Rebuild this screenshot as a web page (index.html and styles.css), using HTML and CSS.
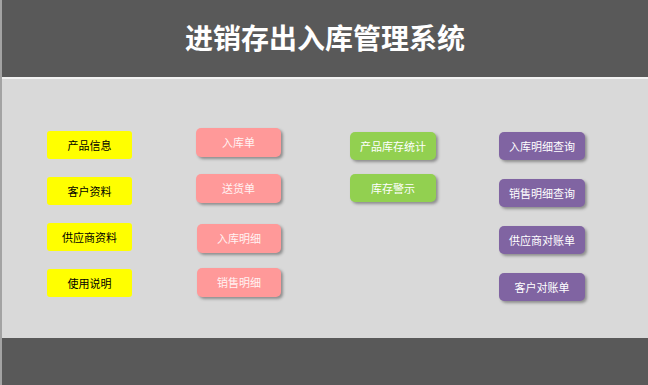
FILE: index.html
```html
<!DOCTYPE html>
<html lang="zh-CN">
<head>
    <meta charset="UTF-8">
    <meta name="viewport" content="width=device-width, initial-scale=1.0">
    <title>进销存出入库管理系统</title>
    <link rel="stylesheet" href="styles.css">
</head>
<body>
    <div class="sheet">
        <header class="banner">
            <h1>进销存出入库管理系统</h1>
        </header>

        <!-- menu buttons, one column per group -->
        <main class="menu">
            <div class="col col-base">
                <a class="btn btn-yellow" href="#">产品信息</a>
                <a class="btn btn-yellow" href="#">客户资料</a>
                <a class="btn btn-yellow" href="#">供应商资料</a>
                <a class="btn btn-yellow" href="#">使用说明</a>
            </div>
            <div class="col col-bills">
                <a class="btn btn-pink" href="#">入库单</a>
                <a class="btn btn-pink" href="#">送货单</a>
                <a class="btn btn-pink shift-down" href="#">入库明细</a>
                <a class="btn btn-pink shift-up" href="#">销售明细</a>
            </div>
            <div class="col col-stock">
                <a class="btn btn-green" href="#">产品库存统计</a>
                <a class="btn btn-green" href="#">库存警示</a>
            </div>
            <div class="col col-query">
                <a class="btn btn-purple" href="#">入库明细查询</a>
                <a class="btn btn-purple" href="#">销售明细查询</a>
                <a class="btn btn-purple" href="#">供应商对账单</a>
                <a class="btn btn-purple" href="#">客户对账单</a>
            </div>
        </main>

        <footer class="bottom-bar"></footer>
    </div>
</body>
</html>
```

FILE: styles.css
```css
:root {
    --dark: #595959;
    --panel: #d9d9d9;
    --yellow: #ffff00;
    --pink: #ff9999;
    --green: #92d050;
    --purple: #8064a2;
    --shadow: 2px 2px 3px rgba(0, 0, 0, 0.35);
}

html, body {
    margin: 0;
    padding: 0;
}

body {
    font-family: "Noto Sans CJK SC", "Noto Sans", sans-serif;
    background-color: var(--panel);
}

.sheet {
    width: 648px;
    height: 385px;
    display: flex;
    flex-direction: column;
    border-left: 2px solid #a3a3a3;
    box-sizing: border-box;
}

.banner {
    height: 77px;
    background-color: var(--dark);
    border-bottom: 2px solid #f2f2f2;
    display: flex;
    align-items: center;
    justify-content: center;
}

.banner h1 {
    margin: 0 0 3px 0;
    color: #ffffff;
    font-size: 28px;
    font-weight: 700;
}

.menu {
    height: 259px;
    display: flex;
    padding-left: 45px;
    background-color: var(--panel);
}

.col {
    display: flex;
    flex-direction: column;
    width: 86px;
}

.col-base {
    padding-top: 52px;
    gap: 18px;
    width: 85px;
}

.col-bills {
    margin-left: 64px;
    padding-top: 49px;
    gap: 17px;
    width: 85px;
}

.col-stock {
    margin-left: 69px;
    padding-top: 53px;
    gap: 14px;
}

.col-query {
    margin-left: 63px;
    padding-top: 53px;
    gap: 19px;
}

.btn {
    display: flex;
    align-items: center;
    justify-content: center;
    height: 28px;
    font-size: 11px;
    text-decoration: none;
    color: #ffffff;
    border-radius: 5px;
    box-shadow: var(--shadow);
}

.btn-yellow {
    background-color: var(--yellow);
    color: #000000;
    border-radius: 3px;
    box-shadow: none;
}

.btn-pink {
    height: 29px;
    background-color: var(--pink);
    color: #fff3f3;
    padding-bottom: 2px;
    box-sizing: border-box;
}

.btn-pink.shift-down {
    margin-top: 4px;
    margin-left: 1px;
}

.btn-pink.shift-up {
    margin-top: -2px;
    margin-left: 1px;
}

.btn-green {
    background-color: var(--green);
}

.btn-purple {
    background-color: var(--purple);
}

.bottom-bar {
    flex: 1;
    background-color: var(--dark);
}
```
